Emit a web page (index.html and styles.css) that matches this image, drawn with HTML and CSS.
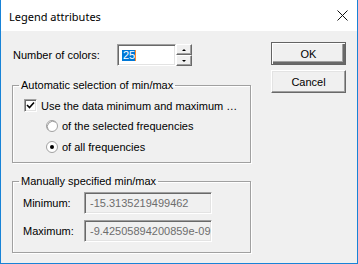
FILE: index.html
```html
<!DOCTYPE html>
<html lang="en">
<head>
    <meta charset="UTF-8">
    <title>Legend attributes</title>
    <link rel="stylesheet" href="styles.css">
</head>
<body>
    <div class="window">
        <div class="titlebar">
            <span class="title">Legend attributes</span>
            <svg class="close" width="11" height="11" viewBox="0 0 11 11">
                <path d="M0.5 0.5 L10.5 10.5 M10.5 0.5 L0.5 10.5" stroke="#111" stroke-width="1" fill="none"/>
            </svg>
        </div>
        <div class="client">
            <div class="main">
                <div class="count-row">
                    <span class="label">Number of colors:</span>
                    <div class="spin-input"><span class="sel">25</span><span class="caret"></span></div>
                    <div class="spin-btns">
                        <div class="spin-btn"><span class="arrow up"></span></div>
                        <div class="spin-btn"><span class="arrow down"></span></div>
                    </div>
                </div>

                <fieldset class="group auto">
                    <legend>Automatic selection of min/max</legend>
                    <div class="opt check-row">
                        <span class="checkbox">
                            <svg width="9" height="9" viewBox="0 0 9 9">
                                <path d="M1 4 L3.5 6.5 L8 1.5" stroke="#000" stroke-width="1.6" fill="none"/>
                            </svg>
                        </span>
                        <span>Use the data minimum and maximum …</span>
                    </div>
                    <div class="opt radio-row first">
                        <svg class="radio" width="12" height="12" viewBox="0 0 12 12">
                            <circle cx="6" cy="6" r="5.5" fill="#fff" stroke="#a0a0a0"/>
                            <path d="M2.2 9.8 A5.5 5.5 0 0 1 9.8 2.2" stroke="#a0a0a0" fill="none"/>
                        </svg>
                        <span>of the selected frequencies</span>
                    </div>
                    <div class="opt radio-row">
                        <svg class="radio" width="12" height="12" viewBox="0 0 12 12">
                            <circle cx="6" cy="6" r="5.5" fill="#fff" stroke="#a0a0a0"/>
                            <circle cx="6" cy="6" r="2" fill="#000"/>
                        </svg>
                        <span>of all frequencies</span>
                    </div>
                </fieldset>

                <fieldset class="group manual">
                    <legend>Manually specified min/max</legend>
                    <div class="field-row">
                        <span class="field-label">Minimum:</span>
                        <div class="field">-15.3135219499462</div>
                    </div>
                    <div class="field-row second">
                        <span class="field-label">Maximum:</span>
                        <div class="field">-9.42505894200859e-09</div>
                    </div>
                </fieldset>
            </div>

            <div class="buttons">
                <button class="btn default">OK</button>
                <button class="btn">Cancel</button>
            </div>
        </div>
    </div>
</body>
</html>
```

FILE: styles.css
```css
html, body {
    margin: 0;
    padding: 0;
}

body {
    font-family: "Liberation Sans", Arial, sans-serif;
    font-size: 11px;
    color: #000;
    background: #fff;
}

.window {
    width: 356px;
    height: 263px;
    border: 1px solid #1883d7;
    border-top: none;
    background: #f0f0f0;
    display: flex;
    flex-direction: column;
}

.titlebar {
    height: 31px;
    background: #fff;
    display: flex;
    align-items: center;
    justify-content: space-between;
    padding: 0 9px 0 8px;
}

.title {
    font-family: "Noto Sans", sans-serif;
    font-size: 11px;
    color: #000;
    margin-top: 1px;
}

.close {
    display: block;
}

.client {
    display: flex;
    padding: 0 11px;
}

.main {
    width: 239px;
}

/* number of colors */
.count-row {
    display: flex;
    align-items: center;
    margin-top: 13px;
    height: 22px;
}

.label {
    width: 104px;
    padding-left: 1px;
}

.spin-input {
    box-sizing: border-box;
    width: 59px;
    height: 22px;
    background: #fff;
    border: 1px solid;
    border-color: #a0a0a0 #fff #fff #a0a0a0;
    box-shadow: inset 1px 1px 0 #696969, inset -1px -1px 0 #e3e3e3;
    display: flex;
    align-items: center;
    padding-left: 4px;
}

.sel {
    background: #0078d7;
    color: #fff;
    line-height: 11px;
    padding: 0 0 0 1px;
}

.caret {
    width: 1px;
    height: 11px;
    background: #ff8a28;
}

.spin-btns {
    display: flex;
    flex-direction: column;
}

.spin-btn {
    box-sizing: border-box;
    width: 16px;
    height: 11px;
    background: #f0f0f0;
    border: 1px solid;
    border-color: #fff #696969 #696969 #fff;
    box-shadow: inset -1px -1px 0 #a0a0a0;
    display: flex;
    align-items: center;
    justify-content: center;
}

.arrow {
    width: 0;
    height: 0;
    border-left: 2px solid transparent;
    border-right: 2px solid transparent;
}

.arrow.up {
    border-bottom: 2px solid #000;
}

.arrow.down {
    border-top: 2px solid #000;
}

/* group boxes */
.group {
    margin: 0;
    padding: 0;
    border: 1px solid #a0a0a0;
    box-shadow: 1px 1px 0 #fff, inset 1px 1px 0 #fff;
}

.group legend {
    margin-left: 6px;
    padding: 0 2px;
    line-height: 13px;
}

.auto {
    margin-top: 13px;
    padding-bottom: 9px;
}

.opt {
    display: flex;
    align-items: center;
    height: 13px;
}

.check-row {
    margin-top: 7px;
    padding-left: 11px;
    gap: 4px;
}

.checkbox {
    box-sizing: border-box;
    width: 13px;
    height: 13px;
    background: #fff;
    border: 1px solid;
    border-color: #a0a0a0 #fff #fff #a0a0a0;
    box-shadow: inset 1px 1px 0 #696969, inset -1px -1px 0 #e3e3e3;
    display: flex;
    align-items: center;
    justify-content: center;
}

.radio-row {
    padding-left: 33px;
    gap: 4px;
    margin-top: 8px;
}

.radio-row.first {
    margin-top: 7px;
}

.radio {
    display: block;
}

.manual {
    margin-top: 12px;
    padding-bottom: 10px;
}

.field-row {
    display: flex;
    align-items: center;
    margin-top: 4px;
    padding-left: 10px;
}

.field-row.second {
    margin-top: 6px;
}

.field-label {
    width: 61px;
}

.field {
    box-sizing: border-box;
    width: 128px;
    height: 22px;
    line-height: 20px;
    padding-left: 5px;
    color: #6d6d6d;
    background: #f0f0f0;
    border: 1px solid;
    border-color: #a0a0a0 #fff #fff #a0a0a0;
    box-shadow: inset 1px 1px 0 #696969, inset -1px -1px 0 #e3e3e3;
    white-space: nowrap;
    overflow: hidden;
}

/* buttons */
.buttons {
    margin-left: 20px;
    margin-top: 11px;
    display: flex;
    flex-direction: column;
    gap: 5px;
}

.btn {
    box-sizing: border-box;
    width: 75px;
    height: 23px;
    font-family: "Liberation Sans", Arial, sans-serif;
    font-size: 11px;
    color: #000;
    background: #f0f0f0;
    border: 1px solid;
    border-color: #fff #696969 #696969 #fff;
    box-shadow: inset -1px -1px 0 #a0a0a0, inset 1px 1px 0 #e3e3e3;
    padding: 0;
}

.btn.default {
    border: 1px solid #646464;
    box-shadow: inset 1px 1px 0 #fff, inset -2px -2px 0 #696969, inset -3px -3px 0 #a0a0a0;
}
```
